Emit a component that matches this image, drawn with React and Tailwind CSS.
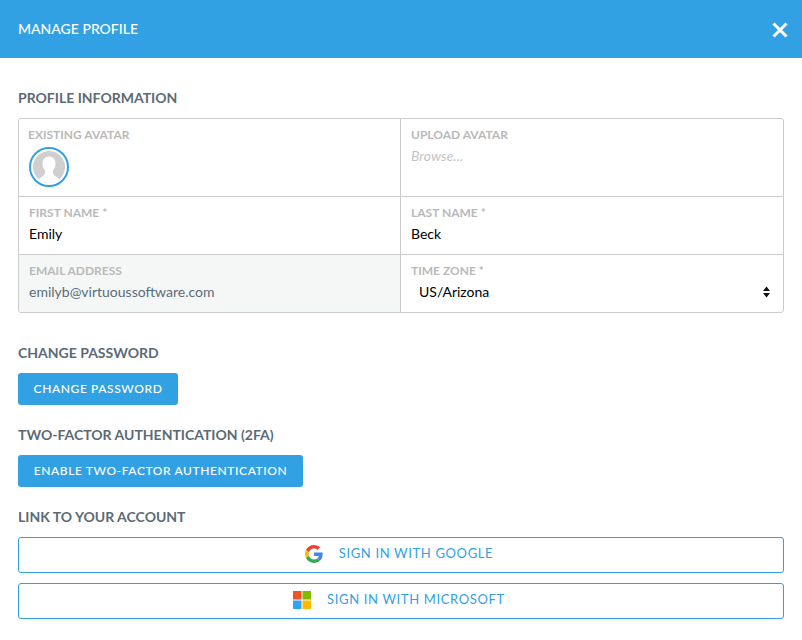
import React from 'react';

const lato = 'font-["Lato",sans-serif]';

function SectionTitle({ children, className = '' }) {
  return <h3 className={`h-5 text-sm leading-5 font-bold uppercase text-[#5b6b76] ${className}`}>{children}</h3>;
}

function FieldLabel({ children }) {
  return <div className="text-xs leading-4 font-bold uppercase text-[#b9b9b9]">{children}</div>;
}

function SolidButton({ children, className = '' }) {
  return (
    <button type="button" className={`block h-8 rounded-[3px] bg-[#32a1e4] text-xs font-medium uppercase tracking-[0.05em] text-white ${className}`}>
      {children}
    </button>
  );
}

function GoogleIcon() {
  return (
    <svg viewBox="0 0 48 48" className="h-[18px] w-[18px]">
      <path fill="#EA4335" d="M24 9.500c3.500 0 6.700 1.200 9.200 3.600l6.900-6.900C35.900 2.400 30.400 0 24 0 14.600 0 6.500 5.400 2.600 13.200l8 6.200C12.400 13.700 17.700 9.500 24 9.500z" />
      <path fill="#4285F4" d="M47 24.500c0-1.600-.1-3.100-.4-4.500H24v9h12.900c-.6 3-2.200 5.500-4.700 7.200l7.700 6C44.400 38 47 31.800 47 24.500z" />
      <path fill="#FBBC05" d="M10.600 28.600c-.5-1.400-.8-3-.8-4.600s.3-3.200.8-4.600l-8-6.200C.9 16.500 0 20.100 0 24s.9 7.500 2.600 10.800l8-6.200z" />
      <path fill="#34A853" d="M24 48c6.500 0 11.900-2.100 15.900-5.800l-7.700-6c-2.200 1.400-4.900 2.300-8.200 2.300-6.300 0-11.600-4.200-13.400-9.900l-8 6.200C6.500 42.600 14.600 48 24 48z" />
    </svg>
  );
}

function MicrosoftIcon() {
  return (
    <svg viewBox="0 0 18 18" className="h-[18px] w-[18px]">
      <rect x="0" y="0" width="8.500" height="8.500" fill="#F25325" />
      <rect x="9.500" y="0" width="8.500" height="8.500" fill="#80BA01" />
      <rect x="0" y="9.500" width="8.500" height="8.500" fill="#2FA4F0" />
      <rect x="9.500" y="9.500" width="8.500" height="8.500" fill="#FFB902" />
    </svg>
  );
}

function OutlineButton({ icon, children }) {
  return (
    <button type="button" className="flex h-9 w-full items-center justify-center gap-4 rounded-[3px] border border-[#32a1e4] bg-white pr-1 pb-[2px] text-[13px] font-normal uppercase tracking-[0.05em] text-[#32a1e4]">
      {icon}
      <span>{children}</span>
    </button>
  );
}

export default function App() {
  return (
    <div className={`h-[640px] w-full overflow-hidden bg-white ${lato}`}>
      <header className="flex h-[58px] items-center justify-between bg-[#32a1e4] pl-[18px] pr-[14px] text-white">
        <h2 className="mb-[1px] text-sm font-medium uppercase">Manage Profile</h2>
        <svg viewBox="0 0 16 16" className="mt-[1px] h-4 w-4" fill="none" stroke="white" strokeWidth="3" strokeLinecap="butt">
          <path d="M1.500 1.500l13 13M14.500 1.500l-13 13" />
        </svg>
      </header>

      <main className="px-[18px] pt-[30px]">
        <SectionTitle>Profile Information</SectionTitle>

        <div className="mt-[10px] grid grid-cols-[382px_1fr] grid-rows-[78px_58px_57px] overflow-hidden rounded-[3px] border border-[#cccccc]">
          <div className="border-r border-b border-[#cccccc] pl-[9px] pr-[10px] pt-2">
            <FieldLabel>Existing Avatar</FieldLabel>
            <div className="mt-[4px] ml-[1px] h-10 w-10 overflow-hidden rounded-full border-2 border-[#32a1e4] bg-white p-[2px]">
              <svg viewBox="0 0 32 32" className="h-full w-full rounded-full bg-[#cfcfcf]">
                <path fill="white" d="M16 5.500c-4 0-6.500 3-6.500 7 0 3 1 5.400 2.500 7 .5 2-.5 4-2 5.200C8.500 26 7 27 6 28c3 3 6 4 10 4s7-1 10-4c-1-1-2.500-2-4-3.300-1.500-1.200-2.500-3.200-2-5.200 1.500-1.600 2.500-4 2.500-7 0-4-2.500-7-6.500-7z" />
              </svg>
            </div>
          </div>
          <div className="border-b border-[#cccccc] px-[10px] pt-2">
            <FieldLabel>Upload Avatar</FieldLabel>
            <div className="mt-[3px] text-sm leading-5 italic text-[#c4c4c4]">Browse...</div>
          </div>

          <div className="border-r border-b border-[#cccccc] pl-[10px] pr-[10px] pt-2">
            <FieldLabel>First Name *</FieldLabel>
            <div className="mt-[3px] text-sm leading-5 text-black">Emily</div>
          </div>
          <div className="border-b border-[#cccccc] px-[10px] pt-2">
            <FieldLabel>Last Name *</FieldLabel>
            <div className="mt-[3px] text-sm leading-5 text-black">Beck</div>
          </div>

          <div className="border-r border-[#cccccc] bg-[#f5f7f7] pl-[10px] pr-[10px] pt-2">
            <FieldLabel>Email Address</FieldLabel>
            <div className="mt-[3px] text-sm leading-5 text-[#5b6b76]">emilyb@virtuoussoftware.com</div>
          </div>
          <div className="px-[10px] pt-2">
            <FieldLabel>Time Zone *</FieldLabel>
            <div className="mt-[3px] flex items-center justify-between pl-2 pr-[3px] text-sm leading-5 text-black">
              <span>US/Arizona</span>
              <svg viewBox="0 0 7 12" className="h-3 w-[7px]" fill="#111111">
                <path d="M3.500 0.500L7 5H0zM3.500 11.500L0 7h7z" />
              </svg>
            </div>
          </div>
        </div>

        <SectionTitle className="mt-[30px]">Change Password</SectionTitle>
        <SolidButton className="mt-[10px] w-40">Change Password</SolidButton>

        <SectionTitle className="mt-5">Two-Factor Authentication (2FA)</SectionTitle>
        <SolidButton className="mt-[10px] w-[285px]">Enable Two-Factor Authentication</SolidButton>

        <SectionTitle className="mt-5">Link To Your Account</SectionTitle>
        <div className="mt-[10px] flex flex-col gap-[10px]">
          <OutlineButton icon={<GoogleIcon />}>Sign in with Google</OutlineButton>
          <OutlineButton icon={<MicrosoftIcon />}>Sign in with Microsoft</OutlineButton>
        </div>
      </main>
    </div>
  );
}
